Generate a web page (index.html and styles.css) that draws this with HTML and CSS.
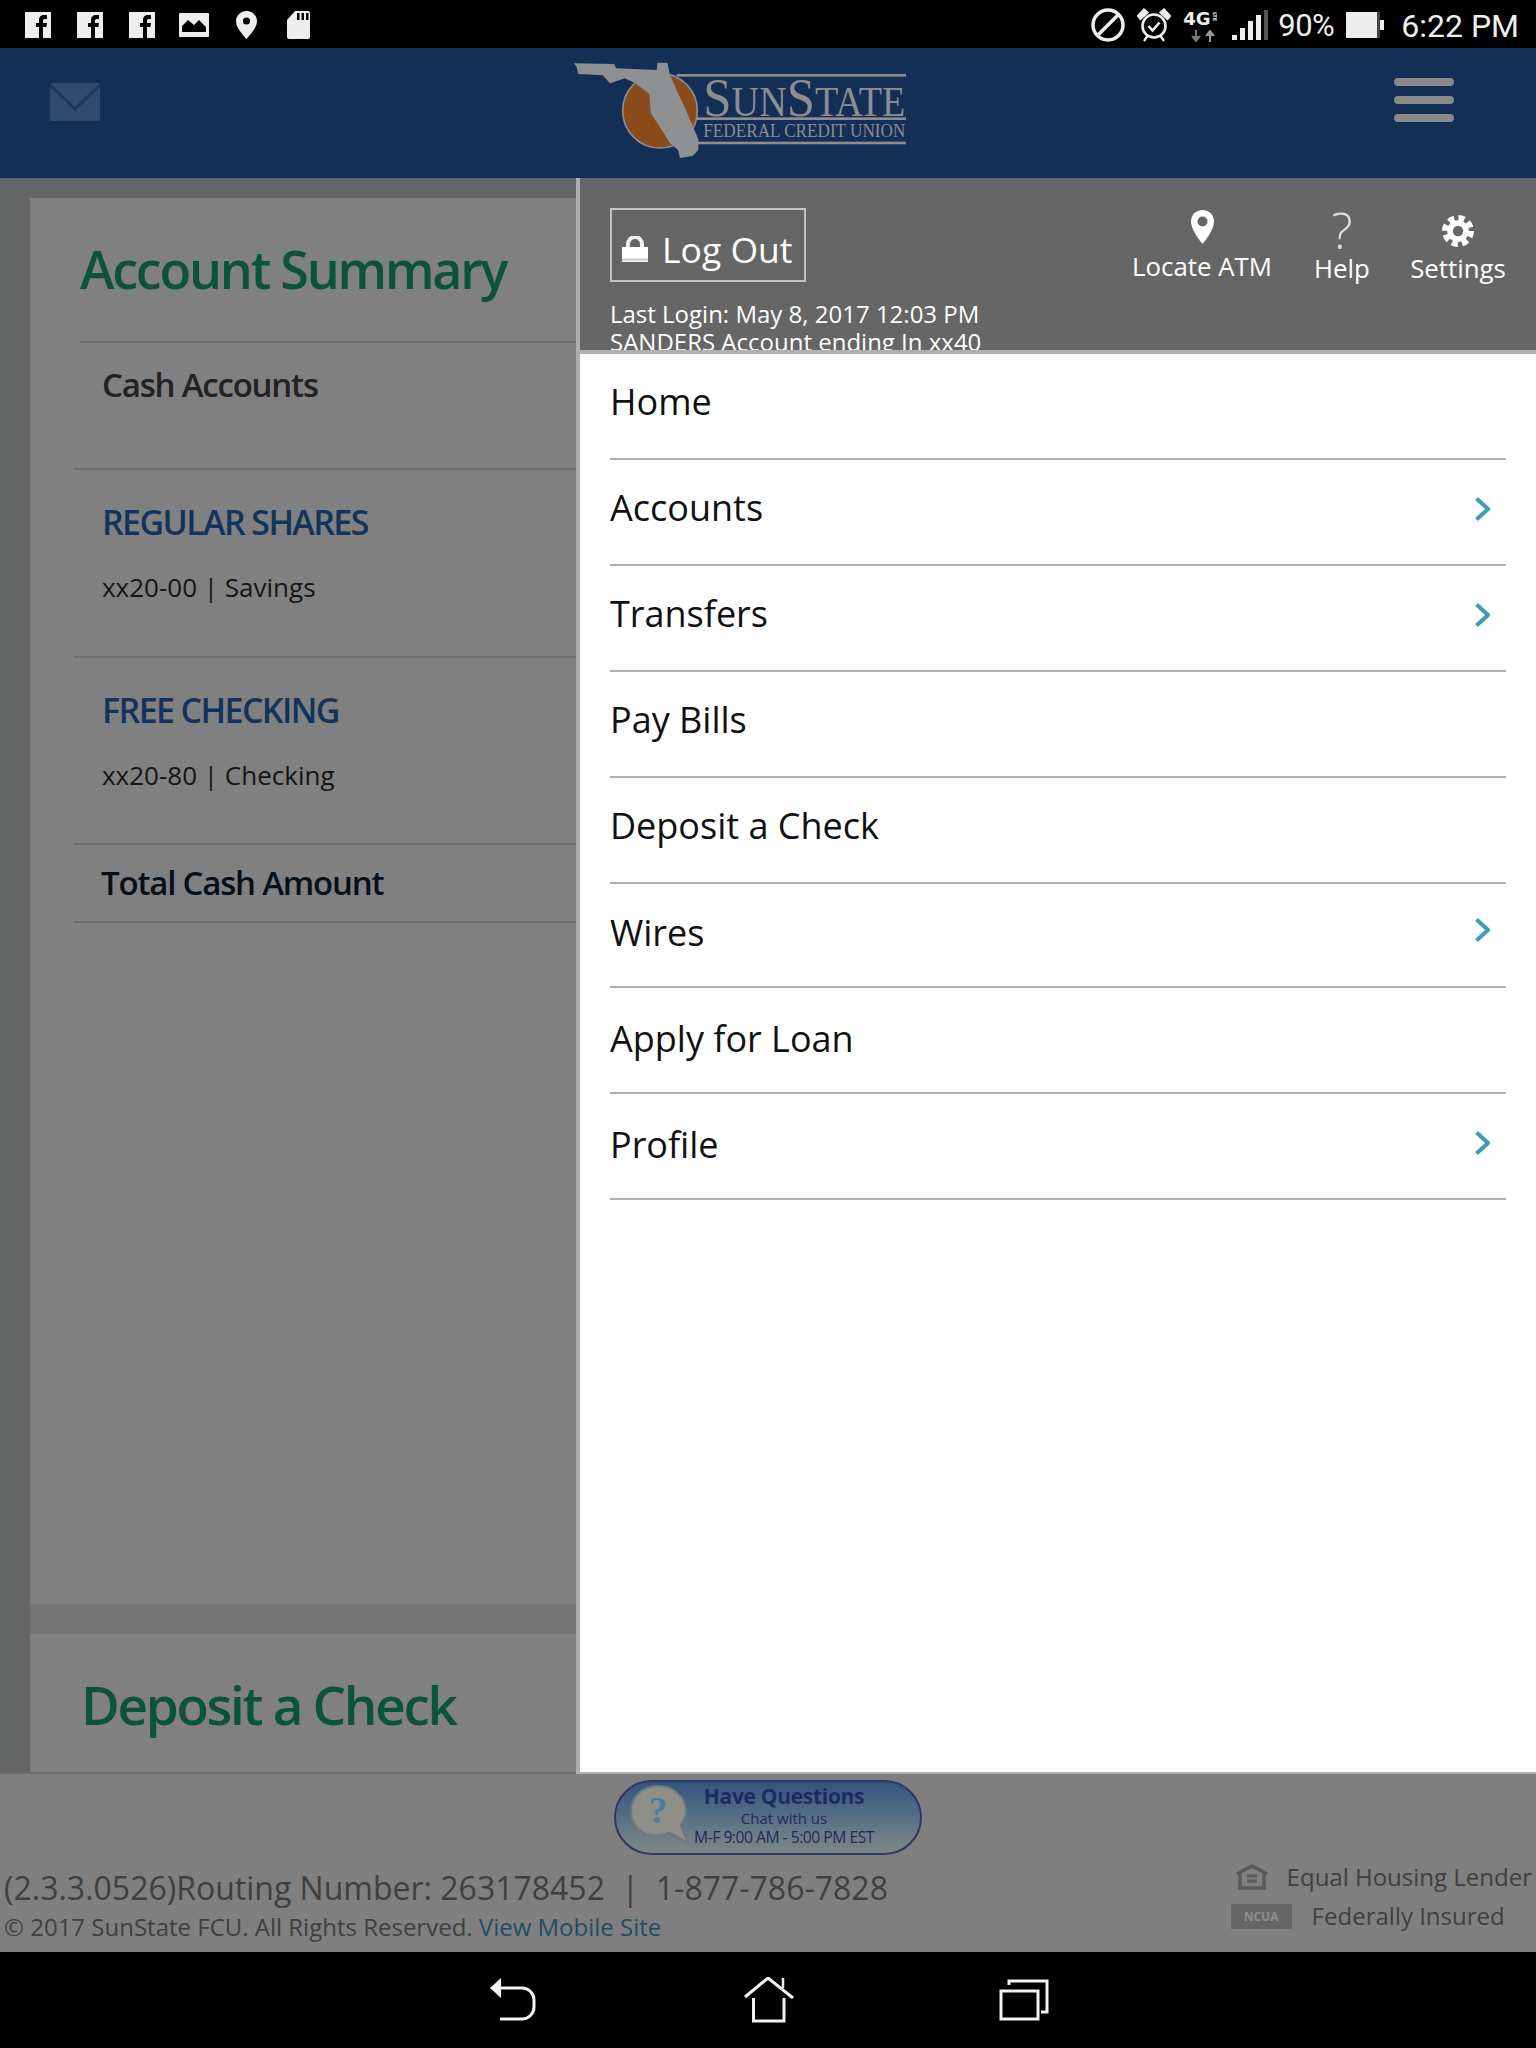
FILE: index.html
```html
<!DOCTYPE html>
<html lang="en">
<head>
<meta charset="utf-8">
<title>SunState Federal Credit Union</title>
<link rel="stylesheet" href="styles.css">
</head>
<body>
<div class="screen">
  <div class="statusbar">
    <div class="status-left">
      <svg class="ico-fb" viewBox="0 0 26 26"><rect width="26" height="26" fill="#eee"/><path d="M14 26V15h-3v-4h3V8c0-3 2-5 5-5h3v4h-2c-1.300 0-2 .7-2 2v2h4l-.6 4H18v11z" fill="#000"/></svg>
      <svg class="ico-fb" viewBox="0 0 26 26"><rect width="26" height="26" fill="#eee"/><path d="M14 26V15h-3v-4h3V8c0-3 2-5 5-5h3v4h-2c-1.300 0-2 .7-2 2v2h4l-.6 4H18v11z" fill="#000"/></svg>
      <svg class="ico-fb" viewBox="0 0 26 26"><rect width="26" height="26" fill="#eee"/><path d="M14 26V15h-3v-4h3V8c0-3 2-5 5-5h3v4h-2c-1.300 0-2 .7-2 2v2h4l-.6 4H18v11z" fill="#000"/></svg>
      <svg class="ico-img" viewBox="0 0 30 24"><rect width="30" height="24" rx="1" fill="#eee"/><path d="M3 19V13l6-6 6 5 5-5 7 7v5z" fill="#000"/></svg>
      <svg class="ico-pin" viewBox="0 0 21 28"><path d="M10.500 0C4.700 0 0 4.500 0 10.200 0 16.500 7 24 10.500 28 14 24 21 16.500 21 10.200 21 4.500 16.300 0 10.500 0z" fill="#eee"/><circle cx="10.500" cy="10" r="3.600" fill="#000"/></svg>
      <svg class="ico-sd" viewBox="0 0 23 28"><path d="M8 0h13a2 2 0 0 1 2 2v24a2 2 0 0 1-2 2H2a2 2 0 0 1-2-2V9z" fill="#eee"/><path d="M10 2h2.500v7H10zM14.500 2H17v7h-2.500zM19 2h2.500v7H19z" fill="#000"/></svg>
    </div>
    <div class="status-right">
      <svg class="ico-block" viewBox="0 0 34 34"><circle cx="17" cy="17" r="15" fill="none" stroke="#eee" stroke-width="3.500"/><path d="M7 27 27 7" stroke="#eee" stroke-width="3.500"/></svg>
      <svg class="ico-alarm" viewBox="0 0 34 34"><circle cx="17" cy="18" r="11.500" fill="none" stroke="#eee" stroke-width="2.600"/><path d="M11.500 18l4 4.500 7-8" fill="none" stroke="#eee" stroke-width="2.600"/><path d="M1 8 7 1.500l3.500 3L3.500 11zM33 8l-6-6.500-3.500 3 7 6.500zM7 33l3.500-5M27 33l-3.500-5" fill="#eee" stroke="#eee" stroke-width="2.200"/></svg>
      <div class="net">
        <div class="net-top"><span class="net-4g">4G</span><span class="net-lte">LTE</span></div>
        <svg class="net-arrows" viewBox="0 0 28 12"><path d="M7 0v7M3 6l4 5 4-5" fill="#777" stroke="#777" stroke-width="2"/><path d="M21 12V4M17 6l4-5 4 5" fill="#999" stroke="#999" stroke-width="2"/></svg>
      </div>
      <svg class="ico-signal" viewBox="0 0 36 30"><rect x="0" y="25" width="5" height="5" fill="#eee"/><rect x="8" y="18" width="5" height="12" fill="#eee"/><rect x="16" y="11" width="5" height="19" fill="#eee"/><rect x="24" y="5" width="5" height="25" fill="#eee"/><rect x="32" y="0" width="4" height="30" fill="#555"/></svg>
      <span class="pct">90%</span>
      <svg class="ico-batt" viewBox="0 0 39 26"><rect width="31" height="26" fill="#eee"/><rect x="31" y="0" width="3" height="26" fill="#444"/><rect x="34" y="8" width="4" height="10" fill="#eee"/></svg>
      <span class="time">6:22 PM</span>
    </div>
  </div>

  <header class="appbar">
    <svg class="mail" viewBox="0 0 50 38"><rect width="50" height="38" rx="2" fill="#31496c"/><path d="M0 2 25 26 50 2" fill="none" stroke="#1d3759" stroke-width="3"/></svg>
    <svg class="logo" viewBox="0 0 1080 360">
      <rect x="350" y="72" width="688" height="8" fill="#8b8d90"/>
      <rect x="410" y="202" width="628" height="8" fill="#8b8d90"/>
      <rect x="400" y="275" width="638" height="8" fill="#8b8d90"/>
      <circle cx="300" cy="182" r="112" fill="#8a4a1a" stroke="#8b8d90" stroke-width="5"/>
      <path d="M42 40 163 42 168 55 290 60 292 38 322 38 330 75 352 125 378 180 398 228 415 268 415 300 398 318 360 324 354 300 330 280 300 232 272 190 268 132 226 100 195 85 150 100 128 76 55 72 50 52z" fill="#8f9092"/>
      <text class="logo-sun" x="430" y="197" textLength="606" lengthAdjust="spacingAndGlyphs">S<tspan class="logo-sm">UN</tspan>S<tspan class="logo-sm">TATE</tspan></text>
      <text class="logo-fed" x="430" y="262" textLength="606" lengthAdjust="spacingAndGlyphs">FEDERAL CREDIT UNION</text>
    </svg>
    <div class="burger"><span></span><span></span><span></span></div>
  </header>

  <main class="main">
    <section class="page">
      <div class="card">
        <h1 class="card-title">Account Summary</h1>
        <div class="row row-cash">Cash Accounts</div>
        <div class="row row-acct">
          <div class="acct-name">REGULAR SHARES</div>
          <div class="acct-sub">xx20-00 | Savings</div>
        </div>
        <div class="row row-acct">
          <div class="acct-name">FREE CHECKING</div>
          <div class="acct-sub">xx20-80 | Checking</div>
        </div>
        <div class="row row-total">Total Cash Amount</div>
      </div>
      <div class="band"></div>
      <div class="card card-low">
        <h1 class="card-title title-low">Deposit a Check</h1>
      </div>
    </section>

    <aside class="drawer">
      <div class="drawer-head">
        <div class="head-top">
          <a class="logout">
            <svg class="lock" viewBox="0 0 26 26"><defs><linearGradient id="lk" x1="0" y1="0" x2="0" y2="1"><stop offset="0" stop-color="#fff"/><stop offset=".7" stop-color="#fff"/><stop offset=".85" stop-color="#c8c8c8"/><stop offset="1" stop-color="#fff"/></linearGradient></defs><path d="M6 12V8a7 7 0 0 1 14 0v4" fill="none" stroke="#eee" stroke-width="4"/><rect y="11" width="26" height="15" fill="url(#lk)"/></svg>
            <span>Log Out</span>
          </a>
          <div class="tools">
            <a class="tool tool-atm">
              <svg class="tool-pin" viewBox="0 0 23 34"><path d="M11.500 0C5 0 0 5 0 11.500 0 19 7.500 29 11.500 34 15.500 29 23 19 23 11.500 23 5 18 0 11.500 0z" fill="#fff"/><circle cx="11.500" cy="11.500" r="5" fill="#666"/></svg>
              <span>Locate ATM</span>
            </a>
            <a class="tool tool-help">
              <span class="q">?</span>
              <span>Help</span>
            </a>
            <a class="tool tool-set">
              <svg class="gear" viewBox="0 0 34 34"><circle cx="17" cy="17" r="11.500" fill="#fff"/><circle cx="17" cy="17" r="14" fill="none" stroke="#fff" stroke-width="6" stroke-dasharray="6.500 4.500"/><circle cx="17" cy="17" r="5.500" fill="#666"/></svg>
              <span>Settings</span>
            </a>
          </div>
        </div>
        <div class="lastlogin">Last Login: May 8, 2017 12:03 PM<br>SANDERS Account ending In xx40</div>
      </div>
      <nav class="menu">
        <a class="menu-item">Home</a>
        <a class="menu-item">Accounts<svg class="chev" viewBox="0 0 15 24"><path d="M1.500 1.500 13 12 1.500 22.500" fill="none" stroke="#3f9db5" stroke-width="4"/></svg></a>
        <a class="menu-item">Transfers<svg class="chev" viewBox="0 0 15 24"><path d="M1.500 1.500 13 12 1.500 22.500" fill="none" stroke="#3f9db5" stroke-width="4"/></svg></a>
        <a class="menu-item">Pay Bills</a>
        <a class="menu-item">Deposit a Check</a>
        <a class="menu-item menu-item-short">Wires<svg class="chev" viewBox="0 0 15 24"><path d="M1.500 1.500 13 12 1.500 22.500" fill="none" stroke="#3f9db5" stroke-width="4"/></svg></a>
        <a class="menu-item menu-item-late">Apply for Loan</a>
        <a class="menu-item menu-item-late">Profile<svg class="chev" viewBox="0 0 15 24"><path d="M1.500 1.500 13 12 1.500 22.500" fill="none" stroke="#3f9db5" stroke-width="4"/></svg></a>
      </nav>
    </aside>
  </main>

  <footer class="footer">
    <div class="chat-wrap">
      <a class="chat">
        <svg class="chat-bubble" viewBox="0 0 60 62"><path d="M28 2C13 2 2 12 2 27c0 13 10 23 24 23 5 0 9-1 13-3l18 10-7-17c3-4 5-8 5-13C55 12 43 2 28 2z" fill="#8d8f88" stroke="#6f7a80" stroke-width="2"/><text class="chat-q" x="28" y="38">?</text></svg>
        <div class="chat-text">
          <div class="chat-a">Have Questions</div>
          <div class="chat-b">Chat with us</div>
          <div class="chat-c">M-F 9:00 AM - 5:00 PM EST</div>
        </div>
      </a>
    </div>
    <div class="foot-row">
      <div class="foot-left">
        <div class="routing">(2.3.3.0526)Routing Number: 263178452 &nbsp;|&nbsp; 1-877-786-7828</div>
        <div class="copy">© 2017 SunState FCU. All Rights Reserved. <a class="mobile">View Mobile Site</a></div>
      </div>
      <div class="foot-right">
        <div class="ehl">
          <svg class="ehl-ico" viewBox="0 0 32 26"><path d="M1 10 16 2 31 10M4 9v15h24V9" fill="none" stroke="#5a5a5a" stroke-width="3.500"/><path d="M11 12h10M11 17h10" stroke="#5a5a5a" stroke-width="3"/></svg>
          <span>Equal Housing Lender</span>
        </div>
        <div class="fed">
          <span class="ncua">NCUA</span>
          <span>Federally Insured</span>
        </div>
      </div>
    </div>
  </footer>

  <div class="navbar">
    <svg class="nav-back" viewBox="0 0 46 44"><path d="M10 10H32a12 12 0 0 1 12 12v7a12 12 0 0 1-12 12H10" fill="none" stroke="#f2f2f2" stroke-width="3"/><path d="M0 10 11 0V20z" fill="#f2f2f2"/></svg>
    <svg class="nav-home" viewBox="0 0 50 46"><path d="M1 20 24 1 49 21" fill="none" stroke="#f2f2f2" stroke-width="3"/><path d="M39 1v10" stroke="#f2f2f2" stroke-width="2.500"/><path d="M9.500 21V44H40V21" fill="none" stroke="#f2f2f2" stroke-width="3"/></svg>
    <svg class="nav-recent" viewBox="0 0 50 42"><path d="M10 6V2H48V33H42" fill="none" stroke="#f2f2f2" stroke-width="3"/><rect x="2" y="12" width="37" height="28" fill="none" stroke="#f2f2f2" stroke-width="3"/></svg>
  </div>
</div>
</body>
</html>
```

FILE: styles.css
```css
* { box-sizing: border-box; }
html, body { margin: 0; padding: 0; background: #000; }
body { font-family: "Open Sans", "Liberation Sans", sans-serif; }
a { color: inherit; text-decoration: none; }

.screen { width: 1536px; height: 2048px; display: flex; flex-direction: column; overflow: hidden; }

/* status bar */
.statusbar { height: 48px; background: #000; display: flex; justify-content: space-between; align-items: flex-start; flex: none; }
.status-left { display: flex; align-items: flex-start; padding: 12px 0 0 25px; }
.ico-fb { width: 26px; height: 26px; margin-right: 26px; }
.ico-img { width: 30px; height: 24px; margin: 1px 27px 0 -2px; }
.ico-pin { width: 21px; height: 28px; margin: -1px 30px 0 0; }
.ico-sd { width: 23px; height: 28px; margin-top: -1px; }
.status-right { display: flex; align-items: flex-start; padding: 8px 17px 0 0; color: #eee; font-family: Roboto, "Liberation Sans", sans-serif; }
.ico-block { width: 34px; height: 34px; margin-right: 12px; }
.ico-alarm { width: 34px; height: 34px; margin-right: 12px; }
.net { width: 38px; margin: 4px 11px 0 0; }
.net-top { display: flex; align-items: flex-start; height: 14px; line-height: 14px; font-weight: 700; font-family: "DejaVu Sans", sans-serif; }
.net-4g { font-size: 18px; }
.net-lte { font-size: 5px; writing-mode: vertical-rl; line-height: 6px; margin-left: 1px; }
.net-arrows { display: block; width: 28px; height: 12px; margin: 4px 0 0 6px; }
.ico-signal { width: 36px; height: 30px; margin: 2px 10px 0 0; }
.pct { font-size: 31px; line-height: 36px; width: 58px; letter-spacing: -.5px; margin-right: 10px; white-space: nowrap; }
.ico-batt { width: 39px; height: 26px; margin: 4px 16px 0 0; }
.time { font-size: 32px; line-height: 36px; white-space: nowrap; }

/* header */
.appbar { height: 130px; background: #132f55; flex: none; display: flex; align-items: flex-start; position: relative; }
.mail { width: 50px; height: 38px; margin: 35px 0 0 50px; flex: none; }
.logo { width: 360px; height: 120px; margin: 2px 0 0 460px; flex: none; }
.logo-sun { font-family: "Liberation Serif", serif; font-size: 165px; fill: #8b8d90; }
.logo-sm { font-size: 124px; }
.logo-fed { font-family: "Liberation Serif", serif; font-size: 54px; fill: #8b8d90; }
.burger { margin: 30px 0 0 474px; width: 60px; flex: none; display: flex; flex-direction: column; gap: 10px; }
.burger span { display: block; height: 8px; border-radius: 4px; background: #8a8a8a; }

/* main */
.main { flex: none; height: 1596px; display: flex; background: #636664; }

/* left page */
.page { width: 576px; flex: none; padding: 20px 0 0 30px; display: flex; flex-direction: column; overflow: hidden; background: #636664; border-bottom: 2px solid #6c6c6c; }
.card { background: #808080; flex: 1; min-height: 0; }
.card-low { flex: none; height: 138px; padding-top: 35px; }
.band { height: 30px; background: #747474; flex: none; }
.card-title { margin: 0 0 0 50px; height: 145px; border-bottom: 2px solid #6e6e6e; font-size: 52px; line-height: 72px; padding-top: 35px; font-weight: 600; color: #0b5339; letter-spacing: -2.200px; white-space: nowrap; }
.title-low { margin-left: 51px; height: auto; border: 0; padding: 0; font-size: 53px; letter-spacing: -2.300px; }
.row { margin-left: 44px; padding-left: 28px; border-bottom: 2px solid #6e6e6e; white-space: nowrap; }
.row-cash { height: 127px; font-size: 33px; line-height: 46px; padding-top: 19px; font-weight: 600; color: #222; letter-spacing: -1.200px; }
.row-acct { height: 187.500px; padding-top: 29px; }
.acct-name { font-size: 34px; line-height: 46px; font-weight: 600; color: #12345c; letter-spacing: -1.600px; }
.acct-sub { font-size: 26px; line-height: 36px; margin-top: 24px; color: #151515; }
.row-total { height: 78px; font-size: 33px; line-height: 46px; padding: 15px 0 0 27px; font-weight: 600; color: #06101a; letter-spacing: -1.200px; }

/* drawer */
.drawer { width: 960px; flex: none; border-left: 4px solid #adadad; background: #fff; display: flex; flex-direction: column; border-bottom: 2px solid #adadad; }
.drawer-head { height: 176px; flex: none; background: #666; border-bottom: 4px solid #b0b0b0; overflow: hidden; padding: 30px 30px 0; color: #fff; }
.head-top { display: flex; justify-content: space-between; align-items: flex-start; height: 84px; }
.logout { width: 196px; height: 74px; border: 2px solid #c2c2c2; display: flex; align-items: center; padding: 8px 0 0 10px; gap: 14px; font-size: 35.500px; }
.lock { width: 26px; height: 26px; flex: none; }
.tools { display: flex; align-items: flex-start; font-size: 25.800px; }
.tool { display: flex; flex-direction: column; align-items: center; white-space: nowrap; line-height: 34px; }
.tool-atm { width: 140px; padding-top: 2px; margin-right: 40px; }
.tool-pin { width: 23px; height: 34px; margin-bottom: 5px; }
.tool-help { width: 60px; margin-right: 38px; }
.q { font-size: 50px; line-height: 42px; font-weight: 300; color: #ddd; margin-top: 1px; }
.tool-set { width: 96px; padding-top: 7px; }
.gear { width: 32px; height: 32px; margin-bottom: 4px; }
.lastlogin { font-size: 24px; line-height: 28px; margin-top: 8px; white-space: nowrap; }
.menu { padding: 0 30px; flex: 1; }
.menu-item { height: 106px; display: flex; align-items: center; justify-content: space-between; border-bottom: 2px solid #b0b0b0; font-size: 36px; color: #111; padding: 0 16px 9px 0; }
.chev { width: 15px; height: 24px; margin-top: 3px; }
.menu-item-short { height: 103.500px; padding-bottom: 5px; }
.menu-item-late { padding-bottom: 2px; }
.menu-item-short .chev, .menu-item-late .chev { margin-top: -4px; }

/* footer */
.footer { height: 178px; flex: none; background: #7f7f7f; color: #404040; }
.chat-wrap { display: flex; justify-content: center; padding-top: 6px; }
.chat { width: 308px; height: 75px; border-radius: 38px; border: 2px solid #2c3766; background: linear-gradient(#33547b, #4f6a85 40%, #6c7d86 75%, #7b8585); display: flex; position: relative; padding-left: 12px; }
.chat-bubble { width: 64px; height: 64px; margin-top: 2px; flex: none; }
.chat-q { font-family: "Liberation Serif", serif; font-size: 36px; font-weight: 700; fill: #4f7d99; text-anchor: middle; }
.chat-text { flex: 1; text-align: center; color: #1f2a60; padding: 1px 44px 0 0; white-space: nowrap; }
.chat-a { font-size: 21px; line-height: 27px; font-weight: 700; letter-spacing: -.3px; }
.chat-b { font-size: 15px; line-height: 17px; }
.chat-c { font-size: 15.700px; line-height: 20px; letter-spacing: -.5px; }
.foot-row { display: flex; justify-content: space-between; align-items: flex-start; padding-top: 15px; }
.foot-left { padding-left: 4px; white-space: nowrap; }
.routing { font-size: 32px; line-height: 36px; }
.copy { font-size: 24px; line-height: 34px; margin-top: 4px; }
.mobile { color: #1e4d68; }
.foot-right { font-size: 24px; line-height: 34px; padding: 0 4px 0 0; display: flex; flex-direction: column; align-items: stretch; margin-top: -12px; white-space: nowrap; }
.ehl { display: flex; align-items: center; gap: 19px; height: 38px; }
.ehl-ico { width: 32px; height: 26px; margin-left: 5px; }
.fed { display: flex; align-items: center; gap: 20px; height: 40px; }
.ncua { width: 61px; height: 25px; background: #666; color: #8e8e8e; font-size: 12px; line-height: 25px; font-weight: 700; text-align: center; }

/* nav */
.navbar { flex: 1; background: #000; display: flex; align-items: flex-start; }
.nav-back { width: 46px; height: 44px; margin: 26px 0 0 490px; }
.nav-home { width: 50px; height: 46px; margin: 25px 0 0 208px; }
.nav-recent { width: 50px; height: 42px; margin: 27px 0 0 205px; }
```
